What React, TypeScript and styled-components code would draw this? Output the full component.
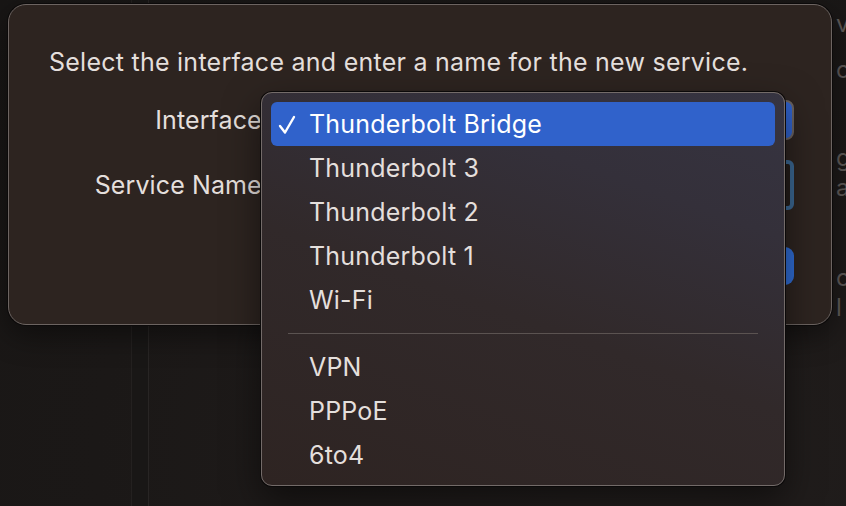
import { FC } from 'react';
import styled, { createGlobalStyle } from 'styled-components';

const colors = {
  desktop: '#1b1817',
  sheet: '#2d2420',
  sheetBorder: '#6c6461',
  text: '#e4dfdc',
  dimText: '#5e5957',
  blue: '#3062cb',
  menuBorder: '#736b69',
  separator: '#5b5351',
};

const GlobalStyle = createGlobalStyle`
  html, body {
    margin: 0;
    padding: 0;
    width: 846px;
    height: 506px;
    overflow: hidden;
    background: ${colors.desktop};
    font-family: Inter, 'Noto Sans', 'Liberation Sans', sans-serif;
    -webkit-font-smoothing: antialiased;
  }
`;

const Desktop = styled.div`
  position: relative;
  width: 846px;
  height: 506px;
  display: flex;
  overflow: hidden;
  background: radial-gradient(ellipse at 75% 90%, #221e1d 0%, #1b1817 60%, #181615 100%);
`;

const Sidebar = styled.div`
  width: 131px;
  flex-shrink: 0;
  border-right: 1px solid #242120;
`;

const Gutter = styled.div`
  width: 16px;
  flex-shrink: 0;
  background: #191716;
  border-right: 1px solid #282524;
`;

const Content = styled.div`
  flex: 1;
  display: flex;
  justify-content: flex-end;
`;

const BackColumn = styled.div`
  width: 10px;
  padding-top: 9px;
  display: flex;
  flex-direction: column;
  overflow: hidden;
  white-space: nowrap;
  color: ${colors.dimText};
  font-size: 24px;
  line-height: 30px;
`;

const BackLine = styled.div<{ $gap?: number }>`
  margin-top: ${(p) => p.$gap ?? 0}px;
  height: 30px;
`;

const Sheet = styled.div`
  position: absolute;
  left: 8px;
  top: 4px;
  width: 824px;
  height: 321px;
  box-sizing: border-box;
  border-radius: 18px;
  background: ${colors.sheet};
  border: 1px solid ${colors.sheetBorder};
  box-shadow: 0 0 0 1px #0c0a0a, 0 10px 30px rgba(0, 0, 0, 0.45);
  padding: 42px 37px 0 40px;
  display: flex;
  flex-direction: column;
`;

const Prompt = styled.p`
  margin: 0;
  color: ${colors.text};
  font-size: 25px;
  line-height: 30px;
  letter-spacing: 0.25px;
  white-space: nowrap;
`;

const Form = styled.div`
  margin-top: 23px;
  display: grid;
  grid-template-columns: 220px 1fr;
  grid-template-rows: 40px 50px;
  column-gap: 6px;
  row-gap: 20px;
  align-items: center;
`;

const Label = styled.span`
  text-align: right;
  color: ${colors.text};
  font-size: 25px;
  letter-spacing: 0.1px;
  white-space: nowrap;
`;

const PopUp = styled.div`
  height: 40px;
  box-sizing: border-box;
  border-radius: 8px;
  border: 2px solid #6a6361;
  background: linear-gradient(to left, ${colors.blue} 0 32px, #403836 32px);
`;

const Field = styled.div`
  height: 50px;
  box-sizing: border-box;
  border-radius: 6px;
  border: 4px solid #3b6792;
  background: #241d1a;
`;

const Buttons = styled.div`
  margin-top: 37px;
  display: flex;
  justify-content: flex-end;
  gap: 14px;
`;

const Button = styled.div<{ $primary?: boolean }>`
  height: 38px;
  width: 130px;
  border-radius: 9px;
  background: ${(p) => (p.$primary ? '#2f6bd2' : '#4a4240')};
`;

const Menu = styled.div`
  position: absolute;
  left: 261px;
  top: 92px;
  width: 524px;
  height: 394px;
  box-sizing: border-box;
  padding: 9px 9px 0;
  border-radius: 11px;
  border: 1px solid ${colors.menuBorder};
  box-shadow: 0 0 0 1px #0b0909, 0 14px 36px rgba(0, 0, 0, 0.5);
  background: linear-gradient(200deg, #363441 0%, #34303a 25%, #31292a 55%, #2e2422 100%);
  display: flex;
  flex-direction: column;
`;

const Item = styled.div<{ $selected?: boolean }>`
  height: 44px;
  flex-shrink: 0;
  display: flex;
  align-items: center;
  border-radius: 6px;
  padding-left: 38px;
  position: relative;
  color: ${(p) => (p.$selected ? '#ffffff' : colors.text)};
  background: ${(p) => (p.$selected ? colors.blue : 'transparent')};
  font-size: 25px;
  letter-spacing: 0.2px;
`;

const Check = styled.svg`
  position: absolute;
  left: 7px;
  top: 12px;
`;

const Separator = styled.div`
  height: 1px;
  margin: 11px 17px 11px 17px;
  background: ${colors.separator};
`;

const mainItems = ['Thunderbolt Bridge', 'Thunderbolt 3', 'Thunderbolt 2', 'Thunderbolt 1', 'Wi-Fi'];
const otherItems = ['VPN', 'PPPoE', '6to4'];

const MenuItem: FC<{ label: string; selected?: boolean }> = ({ label, selected }) => (
  <Item $selected={selected}>
    {selected && (
      <Check width="18" height="21" viewBox="0 0 18 21">
        <path d="M2 12 L7 18.5 L16 3" fill="none" stroke="#fff" strokeWidth="2.4" strokeLinecap="round" strokeLinejoin="round" />
      </Check>
    )}
    {label}
  </Item>
);

export default function App() {
  return (
    <>
      <GlobalStyle />
      <Desktop>
        <Sidebar />
        <Gutter />
        <Content>
          <BackColumn>
            <BackLine>vo</BackLine>
            <BackLine $gap={16}>ot</BackLine>
            <BackLine $gap={58}>g</BackLine>
            <BackLine>a</BackLine>
            <BackLine $gap={60}>o</BackLine>
            <BackLine>l t</BackLine>
          </BackColumn>
        </Content>

        <Sheet>
          <Prompt>Select the interface and enter a name for the new service.</Prompt>
          <Form>
            <Label>Interface:</Label>
            <PopUp />
            <Label>Service Name:</Label>
            <Field />
          </Form>
          <Buttons>
            <Button />
            <Button $primary />
          </Buttons>
        </Sheet>

        <Menu>
          {mainItems.map((label, i) => (
            <MenuItem key={label} label={label} selected={i === 0} />
          ))}
          <Separator />
          {otherItems.map((label) => (
            <MenuItem key={label} label={label} />
          ))}
        </Menu>
      </Desktop>
    </>
  );
}
